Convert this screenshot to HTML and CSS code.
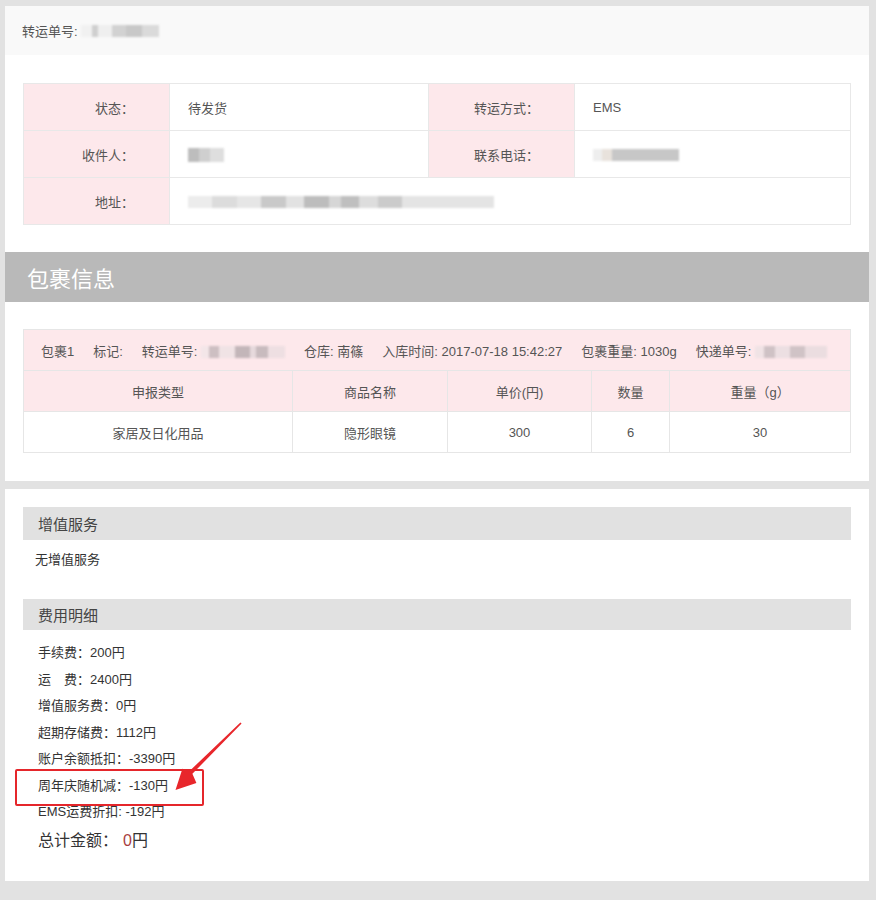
FILE: index.html
```html
<!DOCTYPE html>
<html lang="zh-CN">
<head>
<meta charset="utf-8">
<title>转运单详情</title>
<link rel="stylesheet" href="styles.css">
</head>
<body>
<div class="page">
  <section class="panel panel-top">
    <div class="order-head">转运单号:<span class="blur blur-order"></span></div>

    <table class="info">
      <colgroup>
        <col class="ic1"><col class="ic2"><col class="ic3"><col class="ic4">
      </colgroup>
      <tr>
        <th>状态：</th><td>待发货</td>
        <th>转运方式：</th><td>EMS</td>
      </tr>
      <tr>
        <th>收件人：</th><td><span class="blur blur-name"></span></td>
        <th>联系电话：</th><td><span class="blur blur-phone"></span></td>
      </tr>
      <tr>
        <th>地址：</th><td colspan="3"><span class="blur blur-addr"></span></td>
      </tr>
    </table>

    <h2 class="pkg-title">包裹信息</h2>

    <table class="pkg">
      <colgroup>
        <col class="pc1"><col class="pc2"><col class="pc3"><col class="pc4"><col class="pc5">
      </colgroup>
      <tr class="pkg-meta">
        <td colspan="5">
          <div class="meta">
            <span>包裹1</span>
            <span>标记:</span>
            <span>转运单号: <span class="blur blur-track"></span></span>
            <span>仓库: 南篠</span>
            <span>入库时间: 2017-07-18 15:42:27</span>
            <span>包裹重量: 1030g</span>
            <span>快递单号: <span class="blur blur-express"></span></span>
          </div>
        </td>
      </tr>
      <tr class="pkg-head">
        <th>申报类型</th><th>商品名称</th><th>单价(円)</th><th>数量</th><th>重量（g）</th>
      </tr>
      <tr>
        <td>家居及日化用品</td><td>隐形眼镜</td><td>300</td><td>6</td><td>30</td>
      </tr>
    </table>
  </section>

  <section class="panel panel-bottom">
    <div class="bar bar-service">增值服务</div>
    <p class="none">无增值服务</p>
    <div class="bar bar-fee">费用明细</div>
    <ul class="fees">
      <li>手续费：200円</li>
      <li>运　费：2400円</li>
      <li>增值服务费：0円</li>
      <li>超期存储费：1112円</li>
      <li>账户余额抵扣：-3390円</li>
      <li class="marked">周年庆随机减：-130円</li>
      <li>EMS运费折扣: -192円</li>
    </ul>
    <div class="total">总计金额：<span class="zero">0</span>円</div>
  </section>
</div>

<svg class="arrow" width="876" height="900" viewBox="0 0 876 900" aria-hidden="true">
  <polygon points="241.6,723.6 240.4,722.4 189.6,771.0 182.4,768.8 175.5,790 196.4,783.0 192.4,773.8" fill="#e8262b"/>
</svg>
</body>
</html>
```

FILE: styles.css
```css
* { box-sizing: border-box; }

html, body {
  margin: 0;
  padding: 0;
}

body {
  position: relative;
  background: #e2e2e2;
  font-family: "Liberation Sans", "Noto Sans CJK SC", sans-serif;
  font-size: 13px;
  color: #555;
  width: 876px;
  height: 900px;
  overflow: hidden;
}

.page {
  display: flex;
  flex-direction: column;
  gap: 8px;
  padding: 6px 7px 0 5px;
}

.panel {
  background: #fff;
}

.panel-top {
  padding-bottom: 28px;
}

.order-head {
  height: 49px;
  background: #f9f9f9;
  padding-left: 17px;
  display: flex;
  align-items: center;
  color: #555;
}

.blur {
  display: inline-block;
  vertical-align: middle;
  height: 12px;
  filter: blur(1px);
}

.blur-order {
  width: 78px;
  margin-left: 3px;
  background: linear-gradient(90deg, #f1f1f1 0 14%, #cfcfcf 14% 22%, #efefef 22% 40%, #d2d2d2 40% 58%, #c8c8c8 58% 78%, #dadada 78% 100%);
}

.blur-name {
  width: 36px;
  height: 14px;
  background: linear-gradient(90deg, #bdbdbd 0 30%, #cfcfcf 30% 60%, #dedede 60% 100%);
}

.blur-phone {
  width: 86px;
  background: linear-gradient(90deg, #eeeeee 0 10%, #e8e2dc 10% 22%, #c7c7c7 22% 100%);
}

.blur-addr {
  width: 306px;
  background: linear-gradient(90deg, #ececec 0 8%, #dcdcdc 8% 16%, #e6e6e6 16% 24%, #c9c9c9 24% 32%, #e2e2e2 32% 38%, #bdbdbd 38% 46%, #d6d6d6 46% 50%, #bfbfbf 50% 56%, #dddddd 56% 62%, #cbcbcb 62% 70%, #e4e4e4 70% 100%);
}

.blur-track {
  width: 84px;
  background: linear-gradient(90deg, #f3e6e8 0 10%, #cdbfc2 10% 22%, #f0e3e5 22% 40%, #c3b6b9 40% 58%, #e6d9dc 58% 66%, #c8bbbe 66% 80%, #eedfe2 80% 100%);
}

.blur-express {
  width: 72px;
  background: linear-gradient(90deg, #f0e3e5 0 12%, #cfc2c5 12% 28%, #ecdfe2 28% 48%, #d0c3c6 48% 70%, #ebdde0 70% 100%);
}

/* info table */
.info {
  border-collapse: collapse;
  margin: 28px 19px 0 18px;
  width: 827px;
  table-layout: fixed;
}

.ic1 { width: 146px; }
.ic2 { width: 259px; }
.ic3 { width: 146px; }
.ic4 { width: 276px; }

.info th,
.info td {
  height: 47px;
  border: 1px solid #e8e8e8;
  font-weight: normal;
  color: #555;
  padding: 0;
}

.info th {
  background: #fde8eb;
  text-align: right;
  padding-right: 35px;
}

.info td {
  text-align: left;
  padding-left: 18px;
}

/* package */
.pkg-title {
  margin: 27px 0 0 0;
  height: 50px;
  background: #b9b9b9;
  color: #fff;
  font-size: 22px;
  font-weight: normal;
  padding-left: 22px;
  display: flex;
  align-items: center;
}

.pkg {
  border-collapse: collapse;
  margin: 27px 19px 0 18px;
  width: 827px;
  table-layout: fixed;
}

.pc1 { width: 269px; }
.pc2 { width: 155px; }
.pc3 { width: 144px; }
.pc4 { width: 78px; }
.pc5 { width: 181px; }

.pkg th,
.pkg td {
  height: 41px;
  border: 1px solid #e6e6e6;
  text-align: center;
  font-weight: normal;
  color: #555;
  padding: 0;
}

.pkg-meta td,
.pkg-head th {
  background: #fde8eb;
}

.pkg-meta td {
  text-align: left;
  padding-left: 17px;
}

.meta {
  display: flex;
  align-items: center;
  gap: 19px;
  white-space: nowrap;
}

/* bottom panel */
.panel-bottom {
  padding: 18px 18px 27px 18px;
  height: 392px;
}

.bar {
  background: #e1e1e1;
  font-size: 15px;
  color: #444;
  padding-left: 15px;
  display: flex;
  align-items: center;
}

.bar-service { height: 33px; }
.bar-fee { height: 31px; }

.none {
  margin: 10px 0 29px 0;
  padding-left: 12px;
  line-height: 20px;
  color: #333;
}

.fees {
  list-style: none;
  margin: 10px 0 0 0;
  padding: 0 0 0 15px;
}

.fees li {
  height: 26.5px;
  line-height: 26.5px;
  color: #333;
}

.fees .marked {
  position: relative;
}

.fees .marked::before {
  content: "";
  position: absolute;
  left: -23px;
  top: -4px;
  width: 185px;
  height: 33px;
  border: 2px solid #e5262b;
  border-radius: 2px;
}

.total {
  margin-top: 1px;
  padding-left: 15px;
  line-height: 28px;
  font-size: 16px;
  color: #333;
}

.zero {
  color: #a8403f;
  margin-left: 5px;
}

.arrow {
  position: absolute;
  left: 0;
  top: 0;
  pointer-events: none;
}
```
